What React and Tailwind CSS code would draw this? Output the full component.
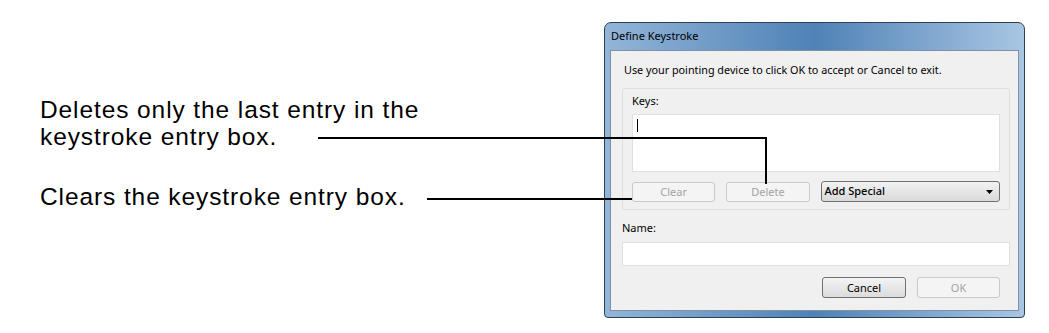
import React from "react";

const ui = { fontFamily: '"Noto Sans", "Open Sans", sans-serif' };

function Btn({ children, disabled, className = "" }) {
  return (
    <div
      className={
        "h-[20px] flex items-center justify-center rounded-[3px] border text-[11px] leading-none " +
        (disabled
          ? "border-[#c9c9c9] bg-[#f4f4f4] text-[#a3a3a3] "
          : "border-[#707070] bg-gradient-to-b from-[#f4f4f4] to-[#dcdcdc] text-black ") +
        className
      }
    >
      {children}
    </div>
  );
}

export default function App() {
  return (
    <div className="relative w-[1049px] h-[333px] bg-white flex overflow-hidden">
      {/* Callout texts */}
      <div
        className="w-[604px] shrink-0 pl-[40px] pt-[96px] text-[24.5px] leading-[27px] tracking-[0.9px] text-black"
        style={{ fontFamily: '"Liberation Sans", Arial, sans-serif' }}
      >
        <p>Deletes only the last entry in the</p>
        <p>keystroke entry box.</p>
        <p className="mt-[33px]">Clears the keystroke entry box.</p>
      </div>

      {/* Dialog */}
      <div
        className="mt-[22px] w-[421px] h-[296px] shrink-0 flex flex-col rounded-t-[7px] rounded-b-[4px] border border-[#2c4158] pl-[5px] pr-[5px] pb-[6px] bg-gradient-to-r from-[#93b5d8] via-[#4f82b6] to-[#a9c6e3]"
        style={ui}
      >
        <div className="h-[27px] shrink-0 flex items-center pl-[1px] text-[11px] text-black">
          Define Keystroke
        </div>
        <div className="flex-1 border border-[#7d91a8] bg-[#f0f0f0] flex flex-col pl-[11px] pr-[8px]">
          <div className="pl-[2px] pt-[11px] h-[37px] text-[10.8px] leading-[16px] text-black">
            Use your pointing device to click OK to accept or Cancel to exit.
          </div>
          {/* Keys group */}
          <div className="h-[122px] border border-[#dcdfe2] rounded-[3px] flex flex-col pl-[9px] pr-[9px]">
            <div className="pt-[4px] h-[25px] text-[11px] leading-[16px] text-black">
              Keys:
            </div>
            <div className="h-[58px] bg-white border border-[#e0e0e0] relative">
              <div className="absolute left-[4px] top-[4px] w-[1px] h-[13px] bg-black" />
            </div>
            <div className="mt-[9px] flex items-center">
              <Btn disabled className="w-[84px]">Clear</Btn>
              <Btn disabled className="w-[84px] ml-[11px]">Delete</Btn>
              <div className="ml-[11px] w-[181px] h-[21px] rounded-[3px] border border-[#707070] bg-gradient-to-b from-[#f2f2f2] to-[#dadada] flex items-center justify-between pl-[3px] pr-[6px] text-[11px] font-medium text-black">
                <span>Add Special</span>
                <svg width="7" height="4" viewBox="0 0 7 4">
                  <path d="M0 0H7L3.5 4Z" fill="#000" />
                </svg>
              </div>
            </div>
          </div>
          <div className="pt-[10px] h-[32px] text-[11px] leading-[16px] text-black">Name:</div>
          <div className="h-[24px] bg-white border border-[#e0e0e0]" />
          <div className="mt-[11px] flex justify-end pr-[10px]">
            <Btn className="w-[84px] h-[21px]">Cancel</Btn>
            <Btn disabled className="w-[83px] h-[21px] ml-[11px]">OK</Btn>
          </div>
        </div>
      </div>

      {/* Callout lines */}
      <div className="absolute left-[318px] top-[137px] w-[449px] h-[2px] bg-black" />
      <div className="absolute left-[765px] top-[137px] w-[2px] h-[47px] bg-black" />
      <div className="absolute left-[427px] top-[198px] w-[205px] h-[2px] bg-black" />
    </div>
  );
}
